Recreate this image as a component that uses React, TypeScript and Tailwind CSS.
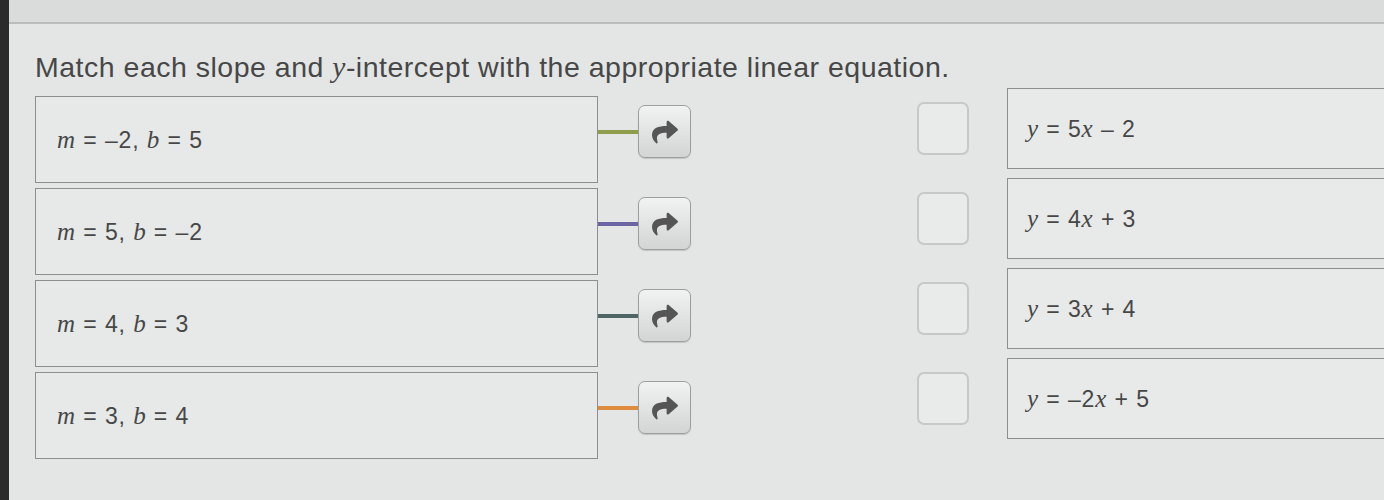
import { FaShare } from 'react-icons/fa';

type Part = { t: string; v?: boolean };

const sans = { fontFamily: '"Liberation Sans", Arial, sans-serif' };

const lefts: { parts: Part[]; line: string }[] = [
  { parts: [{ t: 'm', v: true }, { t: ' = –2, ' }, { t: 'b', v: true }, { t: ' = 5' }], line: 'bg-[#8e9c4c]' },
  { parts: [{ t: 'm', v: true }, { t: ' = 5, ' }, { t: 'b', v: true }, { t: ' = –2' }], line: 'bg-[#6b64a6]' },
  { parts: [{ t: 'm', v: true }, { t: ' = 4, ' }, { t: 'b', v: true }, { t: ' = 3' }], line: 'bg-[#4f6566]' },
  { parts: [{ t: 'm', v: true }, { t: ' = 3, ' }, { t: 'b', v: true }, { t: ' = 4' }], line: 'bg-[#de8c3e]' },
];

const rights: Part[][] = [
  [{ t: 'y', v: true }, { t: ' = 5' }, { t: 'x', v: true }, { t: ' – 2' }],
  [{ t: 'y', v: true }, { t: ' = 4' }, { t: 'x', v: true }, { t: ' + 3' }],
  [{ t: 'y', v: true }, { t: ' = 3' }, { t: 'x', v: true }, { t: ' + 4' }],
  [{ t: 'y', v: true }, { t: ' = –2' }, { t: 'x', v: true }, { t: ' + 5' }],
];

function MathText({ parts }: { parts: Part[] }) {
  return (
    <span className="text-[23px] tracking-[0.9px] text-[#474747] whitespace-pre" style={sans}>
      {parts.map((p, i) =>
        p.v ? (
          <span key={i} className="italic text-[25px] font-['Liberation_Serif',serif]">
            {p.t}
          </span>
        ) : (
          <span key={i}>{p.t}</span>
        ),
      )}
    </span>
  );
}

export default function App() {
  return (
    <div className="flex w-[1384px] h-[500px] overflow-hidden bg-[#e3e6e5]">
      <div className="w-[9px] shrink-0 bg-[#2b2b2b]" />
      <div className="flex flex-col flex-1 min-w-0">
        <div className="h-[24px] shrink-0 bg-[#d9dcdb] border-b-2 border-[#b9bcbb]" />

        <div className="pl-[26px] pt-[26px]">
          <h1 className="text-[28.5px] leading-[34px] text-[#474747] tracking-[0.5px]" style={sans}>
            Match each slope and <span className="italic font-['Liberation_Serif',serif] text-[29.5px]">y</span>-intercept with
            the appropriate linear equation.
          </h1>

          <div className="flex">
            {/* left column: prompts + connectors */}
            <div className="flex flex-col gap-[5px] mt-[12px]">
              {lefts.map((row, i) => (
                <div key={i} className="flex items-center">
                  <div className="w-[563px] h-[87px] flex items-center pl-[21px] border border-[#8d8f8e] bg-[#e6e9e8]">
                    <MathText parts={row.parts} />
                  </div>
                  <div className="flex items-center mb-[16px]">
                    <div className={`w-[40px] h-[4px] ${row.line}`} />
                    <button className="w-[53px] h-[53px] flex items-center justify-center rounded-[7px] border border-[#9c9f9e] bg-gradient-to-b from-[#f1f3f2] to-[#d2d5d4] shadow-[0_1px_1px_rgba(0,0,0,0.15)]">
                      <FaShare className="text-[#555] text-[26px]" />
                    </button>
                  </div>
                </div>
              ))}
            </div>

            {/* right column: targets */}
            <div className="flex flex-col gap-[9px] mt-[4px] ml-[226px] flex-1">
              {rights.map((parts, i) => (
                <div key={i} className="flex items-center">
                  <div className="w-[52px] h-[53px] shrink-0 rounded-[7px] border-2 border-[#c6c9c8] bg-[#e8ebea]" />
                  <div className="flex-1 h-[81px] ml-[38px] mr-[-20px] flex items-center pl-[19px] border border-[#8d8f8e] bg-[#e7eae9]">
                    <MathText parts={parts} />
                  </div>
                </div>
              ))}
            </div>
          </div>
        </div>
      </div>
    </div>
  );
}
